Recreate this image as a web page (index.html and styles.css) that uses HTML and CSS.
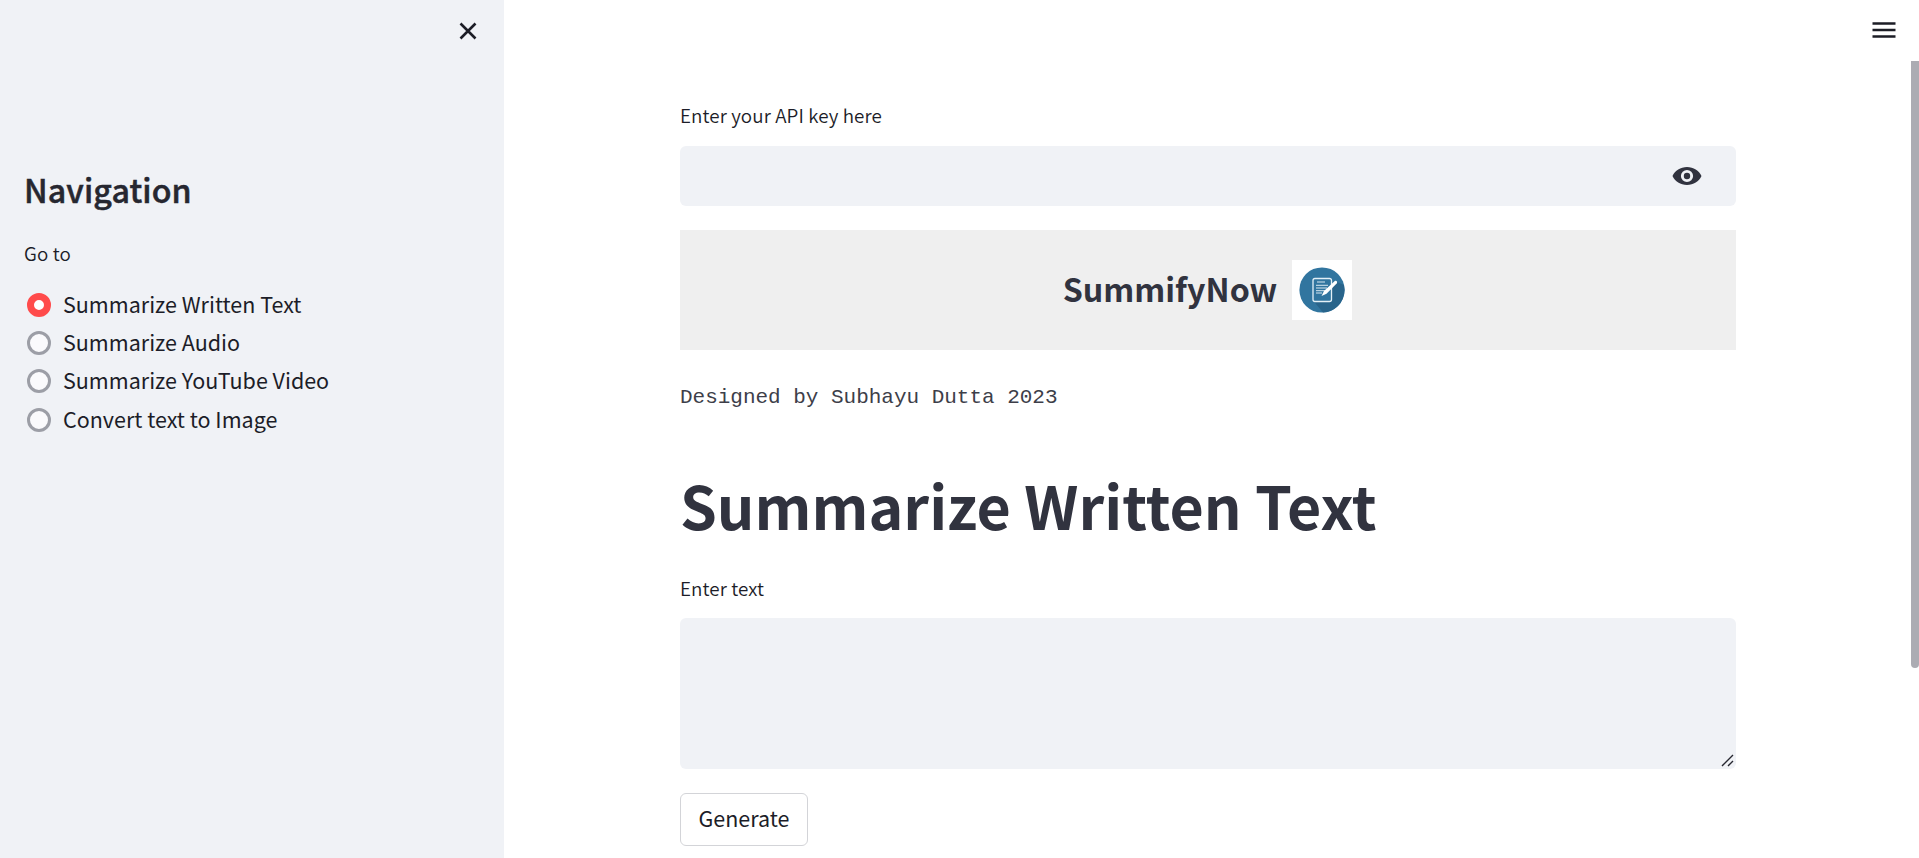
FILE: index.html
```html
<!DOCTYPE html>
<html lang="en">
<head>
<meta charset="utf-8">
<title>SummifyNow</title>
<link rel="stylesheet" href="styles.css">
</head>
<body>
<div class="app">
  <aside class="sidebar">
    <button class="close" aria-label="Close sidebar">
      <svg width="18" height="18" viewBox="0 0 18 18"><path d="M1.500 1.500 16.500 16.500M16.500 1.500 1.500 16.500" fill="none" stroke="#1c1d26" stroke-width="2.600"/></svg>
    </button>
    <h2 class="nav-title">Navigation</h2>
    <p class="label goto">Go to</p>
    <div class="options">
      <div class="option"><span class="radio radio-on"></span><span class="option-text">Summarize Written Text</span></div>
      <div class="option"><span class="radio"></span><span class="option-text">Summarize Audio</span></div>
      <div class="option"><span class="radio"></span><span class="option-text">Summarize YouTube Video</span></div>
      <div class="option"><span class="radio"></span><span class="option-text">Convert text to Image</span></div>
    </div>
  </aside>
  <main class="main">
    <div class="content">
      <p class="label">Enter your API key here</p>
      <div class="input">
        <svg width="30" height="20" viewBox="0 0 30 20"><path fill="#31333f" fill-rule="evenodd" d="M15 1C8.500 1 3 4.600.5 10 3 15.400 8.500 19 15 19s12-3.600 14.500-9C27 4.600 21.500 1 15 1zm0 15.100a6.100 6.100 0 1 1 0-12.200 6.100 6.100 0 0 1 0 12.200zm0-2.900a3.200 3.200 0 1 0 0-6.400 3.200 3.200 0 0 0 0 6.400z"/></svg>
      </div>
      <div class="banner">
        <span class="brand">SummifyNow</span>
        <svg class="logo" width="60" height="60" viewBox="0 0 60 60">
          <path fill="#fff" d="M0 0h60v60H0z"/>
          <circle cx="30" cy="30" r="22.600" fill="#31759f"/>
          <path fill="#28648b" d="M21.500 41 31 52.600A22.600 22.600 0 0 0 52 25L44 21.500 38 28v14z"/>
          <rect x="21" y="18.500" width="18.500" height="23" rx="2" fill="#31759f" stroke="#e3f0f7" stroke-width="1.300"/>
          <path d="M25 22h8M24 25.300h12M24 28h11M24 30.700h9M24 33h6" stroke="#d8e8f1" stroke-width="1"/>
          <path fill="#fff" d="m29.500 36 2.500-5L42.500 21.300c1.500-1.300 3.500.5 2.200 2.200L34.500 33.700z"/>
        </svg>
      </div>
      <p class="credit">Designed by Subhayu Dutta 2023</p>
      <h1 class="title">Summarize Written Text</h1>
      <p class="label">Enter text</p>
      <div class="textarea">
        <svg width="13" height="13" viewBox="0 0 13 13"><path d="M1 12 12 1M7 12l5-5" fill="none" stroke="#262730" stroke-width="1.400"/></svg>
      </div>
      <button class="generate">Generate</button>
    </div>
    <svg class="menu" width="24" height="18" viewBox="0 0 24 18"><path d="M.5 2.500h23M.5 9h23M.5 15.500h23" stroke="#1c1d26" stroke-width="2.500"/></svg>
    <div class="scrollbar"></div>
  </main>
</div>
</body>
</html>
```
FILE: styles.css
```css
* { box-sizing: border-box; }
body {
  margin: 0;
  overflow: hidden;
  background: #fff;
  color: #1c1d28;
  font-family: "Noto Sans CJK SC", "Noto Sans", sans-serif;
}
h1, h2, p { margin: 0; }
button { font: inherit; color: inherit; padding: 0; }
.app { display: flex; height: 858px; }
.sidebar {
  width: 504px;
  flex: none;
  padding: 22px 24px 0;
  background: #f0f2f6;
  display: flex;
  flex-direction: column;
}
.close {
  align-self: flex-end;
  display: flex;
  width: 18px;
  height: 18px;
  margin-right: 3px;
  border: 0;
  background: none;
}
.nav-title {
  margin-top: 125px;
  font-size: 32.2px;
  line-height: 48px;
  font-weight: 500;
  letter-spacing: 0.1px;
  -webkit-text-stroke: 0.5px #262730;
  color: #262730;
}
.label { font-size: 18.8px; line-height: 30px; font-weight: 350; white-space: nowrap; letter-spacing: 0.1px; }
.goto { margin-top: 25px; }
.options { margin-top: 18px; padding-left: 3px; }
.option { display: flex; align-items: center; gap: 12px; height: 38.2px; }
.option-text { font-size: 21.5px; line-height: 36px; position: relative; top: -1px; white-space: nowrap; }
.radio {
  width: 24px;
  height: 24px;
  border: 3px solid #9c9ea6;
  border-radius: 50%;
  background: #fafafc;
}
.radio-on { border: 7.5px solid #ff4b4b; background: #fff; }
.main { position: relative; flex: 1; padding: 100px 183px 0 176px; }
.content { display: flex; flex-direction: column; }
.input {
  display: flex;
  align-items: center;
  justify-content: flex-end;
  height: 60px;
  margin-top: 16px;
  padding-right: 34px;
  border-radius: 6px;
  background: #f0f2f6;
}
.banner {
  display: flex;
  align-items: center;
  justify-content: center;
  gap: 15px;
  height: 120px;
  margin-top: 24px;
  padding-right: 1px;
  background: #efefef;
}
.brand { font-size: 32.2px; line-height: 48px; font-weight: 700; padding-bottom: 4px; color: #31333f; }
.credit {
  margin-top: 33px;
  font-family: "Liberation Mono", monospace;
  font-size: 21px;
  line-height: 30px;
  letter-spacing: -0.02px;
  color: #3d3e49;
  white-space: pre;
}
.title {
  margin-top: 51px;
  font-size: 59.1px;
  line-height: 80px;
  font-weight: 700;
  color: #31333f;
  white-space: nowrap;
}
.title + .label { margin-top: 29px; }
.textarea {
  display: flex;
  align-items: flex-end;
  justify-content: flex-end;
  height: 151px;
  margin-top: 15px;
  padding: 2px;
  border-radius: 6px;
  background: #f0f2f6;
}
.generate {
  width: 128px;
  height: 53px;
  margin-top: 24px;
  padding-bottom: 3px;
  border: 1px solid #d3d4d8;
  border-radius: 6px;
  background: #fff;
  font-size: 21.5px;
  line-height: 36px;
}
.menu { position: absolute; right: 23px; top: 21px; }
.scrollbar {
  position: absolute;
  right: 0;
  top: 61px;
  width: 8px;
  height: 607px;
  border-radius: 0 0 4px 4px;
  background: #acacb3;
}
```
